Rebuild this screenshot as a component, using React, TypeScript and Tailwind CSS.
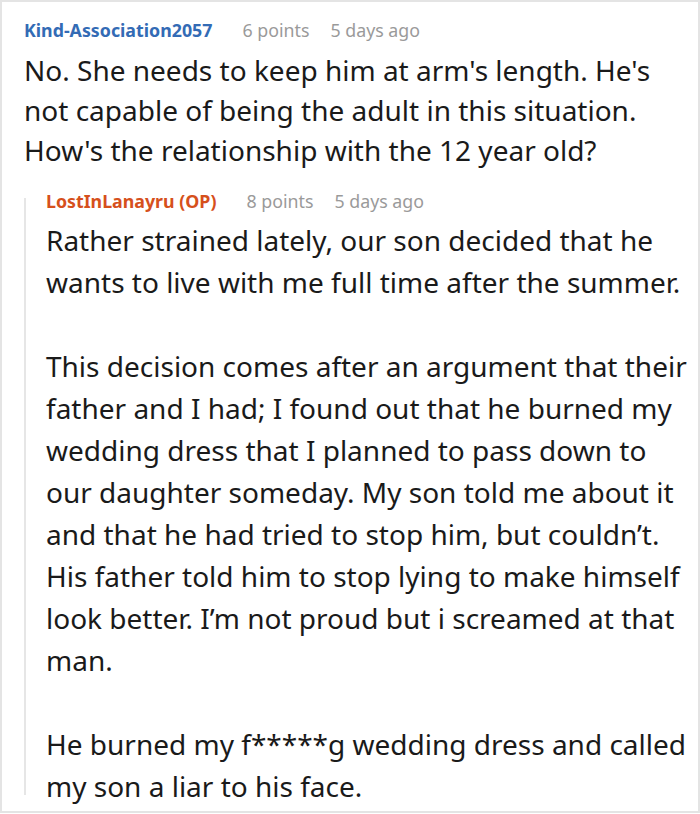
const FONT = { fontFamily: '"Noto Sans", "Open Sans", sans-serif' };

function Meta({ user, color, points }: { user: string; color: string; points: string }) {
  return (
    <div className="flex items-center text-[17.8px] leading-6 whitespace-nowrap">
      <span className={`font-bold ${color}`}>{user}</span>
      <span className="ml-[30px] text-[#9a9a9a]">{points}</span>
      <span className="ml-[21px] text-[#9a9a9a]">5 days ago</span>
    </div>
  );
}

function Lines({ lines }: { lines: string[] }) {
  return (
    <p>
      {lines.map((l) => (
        <span key={l} className="block whitespace-nowrap">
          {l}
        </span>
      ))}
    </p>
  );
}

export default function App() {
  return (
    <div className="w-[700px] h-[814px] bg-white text-[#1a1a1a]" style={FONT}>
      <div className="h-[813px] border-2 border-[#e4e4e4] pt-4 pl-[22px] pr-2 overflow-hidden">
        <Meta user="Kind-Association2057" color="text-[#336bb5]" points="6 points" />
        <div className="text-[28px] leading-[40px] mt-2">
          <Lines
            lines={[
              "No. She needs to keep him at arm's length. He's",
              "not capable of being the adult in this situation.",
              "How's the relationship with the 12 year old?",
            ]}
          />
        </div>
        <div className="mt-[14px] flex">
          <div className="w-[2px] bg-[#e6e6e6] mt-[14px] mb-[12px] shrink-0" />
          <div className="pl-5 pt-[5px]">
            <Meta user="LostInLanayru (OP)" color="text-[#d6501c]" points="8 points" />
            <div className="text-[28px] leading-[42px] mt-[6px]">
              <Lines
                lines={[
                  "Rather strained lately, our son decided that he",
                  "wants to live with me full time after the summer.",
                ]}
              />
              <div className="mt-[42px]">
                <Lines
                  lines={[
                    "This decision comes after an argument that their",
                    "father and I had; I found out that he burned my",
                    "wedding dress that I planned to pass down to",
                    "our daughter someday. My son told me about it",
                    "and that he had tried to stop him, but couldn’t.",
                    "His father told him to stop lying to make himself",
                    "look better. I’m not proud but i screamed at that",
                    "man.",
                  ]}
                />
              </div>
              <div className="mt-[42px]">
                <Lines
                  lines={[
                    "He burned my f*****g wedding dress and called",
                    "my son a liar to his face.",
                  ]}
                />
              </div>
            </div>
          </div>
        </div>
      </div>
    </div>
  );
}
